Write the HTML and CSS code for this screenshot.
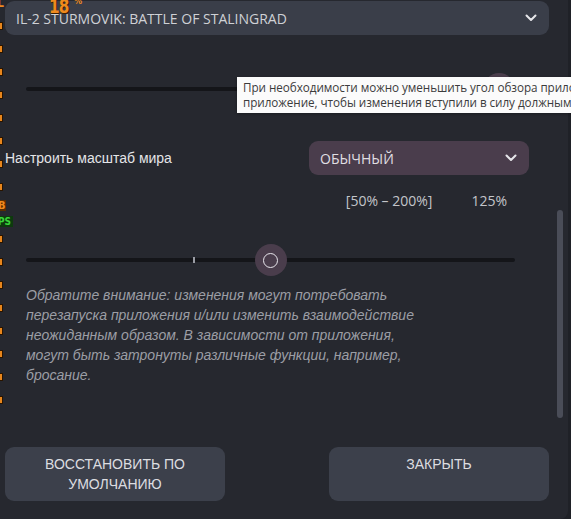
FILE: index.html
```html
<!DOCTYPE html>
<html lang="ru">
<head>
    <meta charset="UTF-8">
    <meta name="viewport" content="width=device-width, initial-scale=1.0">
    <title>Настройки приложения</title>
    <link rel="stylesheet" href="styles.css">
</head>
<body>
    <div class="panel">
        <div class="select select-game">
            <span>IL-2 STURMOVIK: BATTLE OF STALINGRAD</span>
            <svg class="chevron" viewBox="0 0 12 8"><path d="M1.5 1.5 L6 6 L10.5 1.5"/></svg>
        </div>

        <div class="slider slider-fov">
            <div class="track"></div>
            <div class="thumb" style="left: 96.7%;"><span class="ring"></span></div>
        </div>

        <div class="row scale-row">
            <span class="label">Настроить масштаб мира</span>
            <div class="select select-scale">
                <span>ОБЫЧНЫЙ</span>
                <svg class="chevron" viewBox="0 0 12 8"><path d="M1.5 1.5 L6 6 L10.5 1.5"/></svg>
            </div>
        </div>

        <div class="range-row">
            <span>[50% – 200%]</span>
            <span>125%</span>
        </div>

        <div class="slider slider-scale">
            <div class="track"></div>
            <div class="tick" style="left: 34.3%;"></div>
            <div class="thumb" style="left: 50%;"><span class="ring"></span></div>
        </div>

        <p class="note">Обратите внимание: изменения могут потребовать перезапуска приложения и/или изменить взаимодействие неожиданным образом. В зависимости от приложения, могут быть затронуты различные функции, например, бросание.</p>

        <div class="actions">
            <button>ВОССТАНОВИТЬ ПО<br>УМОЛЧАНИЮ</button>
            <button>ЗАКРЫТЬ</button>
        </div>

        <div class="scrollbar"></div>

        <div class="tooltip">
            При необходимости можно уменьшить угол обзора приложения. Перезапустите<br>
            приложение, чтобы изменения вступили в силу должным образом.
        </div>
    </div>

    <!-- game overlay (fps counter) cut off on the left edge -->
    <div class="osd">
        <span class="osd-l">L</span>
        <span class="osd-num">18</span><span class="osd-pct">%</span>
        <div class="osd-col">
            <i></i><i></i><i></i><i></i><i></i><i></i><i></i><i></i>
            <b class="osd-b">B</b>
            <b class="osd-ps">PS</b>
            <i></i><i></i><i></i><i></i><i></i><i></i><i></i><i></i>
        </div>
    </div>
</body>
</html>
```

FILE: styles.css
```css
html, body {
    margin: 0;
    padding: 0;
    height: 100%;
    background-color: #1f2127;
    overflow: hidden;
}

body {
    font-family: 'Liberation Sans', Arial, sans-serif;
    font-size: 14px;
    color: #d6d7db;
}

.panel {
    position: relative;
    box-sizing: border-box;
    width: 568px;
    height: 519px;
    padding: 1px 19px 0 5px;
    background-color: #26282f;
    border-bottom-right-radius: 8px;
    display: flex;
    flex-direction: column;
}

.select {
    display: flex;
    align-items: center;
    justify-content: space-between;
    height: 34px;
    padding: 0 12px 0 11px;
    border-radius: 9px;
    background-color: #3a3e49;
    font-family: 'Open Sans', sans-serif;
    font-size: 14px;
    color: #cfd1d6;
}

.chevron {
    width: 12px;
    height: 8px;
    fill: none;
    stroke: #e6e6ea;
    stroke-width: 2;
    stroke-linecap: round;
    stroke-linejoin: round;
}

.select-scale {
    width: 220px;
    box-sizing: border-box;
    background-color: #4a3d4c;
    color: #e0dfe3;
}

.slider {
    position: relative;
    height: 32px;
    margin-left: 21px;
    margin-right: 34px;
}

.slider .track {
    position: absolute;
    left: 0;
    right: 0;
    top: 14px;
    height: 4px;
    border-radius: 2px;
    background-color: #141519;
}

.slider .tick {
    position: absolute;
    top: 13px;
    width: 2px;
    height: 6px;
    margin-left: -1px;
    background-color: #9a9ca4;
}

.slider .thumb {
    position: absolute;
    top: 0;
    width: 32px;
    height: 32px;
    margin-left: -16px;
    border-radius: 50%;
    background-color: #4a3d4c;
    display: flex;
    align-items: center;
    justify-content: center;
}

.thumb .ring {
    width: 13px;
    height: 13px;
    border: 1.5px solid #e8e6ec;
    border-radius: 50%;
}

.slider-fov {
    margin-top: 38px;
}

.row {
    display: flex;
    align-items: center;
    justify-content: space-between;
}

.scale-row {
    margin-top: 36px;
    margin-right: 20px;
}

.label {
    color: #e4e5e8;
}

.range-row {
    display: flex;
    justify-content: flex-end;
    gap: 39px;
    margin-top: 16px;
    margin-right: 42px;
    line-height: 20px;
    font-family: 'Open Sans', sans-serif;
    font-size: 14px;
    color: #c3c5ca;
}

.slider-scale {
    margin-top: 33px;
}

.note {
    width: 405px;
    margin: 9px 0 0 21px;
    font-style: italic;
    line-height: 20px;
    color: #9c9ea5;
}

.actions {
    display: flex;
    justify-content: space-between;
    margin-top: 62px;
}

.actions button {
    width: 220px;
    height: 54px;
    padding: 7px 10px 0;
    border: none;
    border-radius: 9px;
    background-color: #3c404b;
    color: #dcdde0;
    font-family: 'Liberation Sans', Arial, sans-serif;
    font-size: 14px;
    line-height: 20px;
    text-align: center;
    display: flex;
    justify-content: center;
    align-items: flex-start;
}

.scrollbar {
    position: absolute;
    left: 557px;
    top: 210px;
    width: 6px;
    height: 208px;
    border-radius: 3px;
    background-color: #4a4d58;
}

.tooltip {
    position: absolute;
    left: 237px;
    top: 77px;
    width: 480px;
    padding: 3px 6px;
    background-color: #fbfbfb;
    color: #3c3c3c;
    font-family: 'Open Sans', sans-serif;
    font-size: 11.7px;
    letter-spacing: -0.05px;
    line-height: 15px;
    white-space: nowrap;
    box-shadow: 0 1px 3px rgba(0, 0, 0, 0.3);
}

.osd {
    position: absolute;
    left: 0;
    top: 0;
    font-family: 'DejaVu Sans Condensed', 'DejaVu Sans', sans-serif;
    font-weight: bold;
    color: #ee8a1e;
}

.osd-l {
    position: absolute;
    left: -3px;
    top: -4px;
    font-size: 12px;
}

.osd-num {
    position: absolute;
    left: 49px;
    top: -6px;
    font-size: 20px;
    letter-spacing: -1px;
    transform: scaleX(0.85);
    transform-origin: left top;
    text-shadow: 1px 1px 0 #3a1d00;
}

.osd-pct {
    position: absolute;
    left: 74px;
    top: -4px;
    font-size: 9px;
}

.osd-col {
    position: absolute;
    left: 0;
    top: 22px;
    width: 14px;
    display: flex;
    flex-direction: column;
}

.osd-col i {
    display: block;
    width: 2px;
    height: 6px;
    margin-bottom: 15px;
    background-color: #e8861c;
    border: 1px solid #2a1500;
    border-left: none;
}

.osd-b {
    display: block;
    width: 6px;
    height: 11px;
    margin: -6px 0 9px;
    overflow: hidden;
    font-size: 11px;
    line-height: 11px;
    text-indent: -2px;
    background-color: #5a2e00;
}

.osd-ps {
    display: block;
    margin: -4px 0 8px;
    font-size: 10px;
    line-height: 11px;
    color: #3ad43a;
    background-color: #0d3a0d;
    width: 13px;
    text-indent: -2px;
    overflow: hidden;
}
```
